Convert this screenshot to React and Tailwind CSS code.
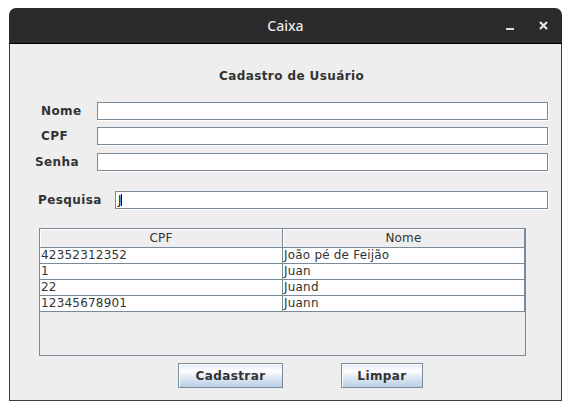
export default function App() {
  const rows = [
    ["42352312352", "João pé de Feijão"],
    ["1", "Juan"],
    ["22", "Juand"],
    ["12345678901", "Juann"],
  ];
  const field =
    "h-[18px] bg-white border border-[#7a8a99] shadow-[1px_1px_0_#ffffff]";
  const btn =
    "h-[25px] border border-[#7a8a99] bg-[linear-gradient(to_bottom,#dde8f3_0%,#ffffff_30%,#dde8f3_60%,#b8cfe5_100%)] font-bold tracking-[0.4px] text-[12px] text-[#333333] flex items-center justify-center shadow-[inset_1px_1px_0_#ffffff]";
  return (
    <div className="w-[571px] h-[410px] bg-white pt-[8px] pl-[9px]">
      <div className="w-[553px] h-[393px] flex flex-col">
        <div className="h-[35px] bg-[#2b2b2b] rounded-t-[7px] grid grid-cols-[1fr_auto_1fr] items-center">
          <div />
          <span className="font-['Noto_Sans'] text-[14px] font-medium text-[#e8e8e8] leading-none">
            Caixa
          </span>
          <div className="flex items-center justify-end pr-[14px]">
            <div className="w-[8px] h-[2px] bg-[#e0e0e0] mt-[6px]" />
            <svg
              width="9"
              height="9"
              viewBox="0 0 9 9"
              className="ml-[25px] mb-[1px]"
            >
              <path
                d="M1 1 L8 8 M8 1 L1 8"
                stroke="#e6e6e6"
                strokeWidth="2.2"
                strokeLinecap="butt"
              />
            </svg>
          </div>
        </div>
        <div className="h-[1px] bg-black" />
        <div className="flex-1 bg-[#eeeeee] border-x border-b border-[#3c3c3c] flex flex-col font-['DejaVu_Sans'] text-[12px] text-[#333333]">
          <div className="mt-[24px] h-[16px] leading-[16px] pl-[209px] font-bold tracking-[0.4px]">
            Cadastro de Usuário
          </div>

          <div className="mt-[18px] flex items-center font-bold tracking-[0.4px]">
            <div className="w-[87px] pl-[31px]">Nome</div>
            <div className={`${field} w-[451px]`} />
          </div>
          <div className="mt-[7px] flex items-center font-bold tracking-[0.4px]">
            <div className="w-[87px] pl-[31px]">CPF</div>
            <div className={`${field} w-[451px]`} />
          </div>
          <div className="mt-[8px] flex items-center font-bold tracking-[0.4px]">
            <div className="w-[87px] pl-[25px]">Senha</div>
            <div className={`${field} w-[451px]`} />
          </div>

          <div className="mt-[20px] flex items-center">
            <div className="w-[105px] pl-[28px] font-bold tracking-[0.4px]">Pesquisa</div>
            <div className={`${field} w-[433px] flex items-center pl-[2px]`}>
              <span className="leading-none text-black">J</span>
              <div className="w-[1px] h-[12px] bg-black -ml-[1px]" />
            </div>
          </div>

          <div className="mt-[19px] ml-[29px] w-[487px] h-[128px] border border-[#7a8a99] bg-[#eeeeee] flex flex-col tracking-[0.2px]">
            <div className="flex h-[19px] border-b border-[#7a8a99]">
              <div className="w-[243px] border-r border-[#7a8a99] flex items-center justify-center shadow-[inset_1px_1px_0_#ffffff]">
                CPF
              </div>
              <div className="w-[242px] border-r border-[#7a8a99] flex items-center justify-center shadow-[inset_1px_1px_0_#ffffff]">
                Nome
              </div>
            </div>
            {rows.map((r, i) => (
              <div key={i} className="flex h-[16px] bg-white border-b border-[#7a8a99] text-[#333333]">
                <div className="w-[243px] border-r border-[#7a8a99] pl-[1px] leading-[15px] whitespace-nowrap overflow-hidden">
                  {r[0]}
                </div>
                <div className="w-[242px] border-r border-[#7a8a99] pl-[1px] leading-[15px] whitespace-nowrap overflow-hidden">
                  {r[1]}
                </div>
              </div>
            ))}
          </div>

          <div className="mt-[7px] flex">
            <div className={`${btn} ml-[168px] w-[105px]`}>Cadastrar</div>
            <div className={`${btn} ml-[58px] w-[82px]`}>Limpar</div>
          </div>
        </div>
      </div>
    </div>
  );
}
